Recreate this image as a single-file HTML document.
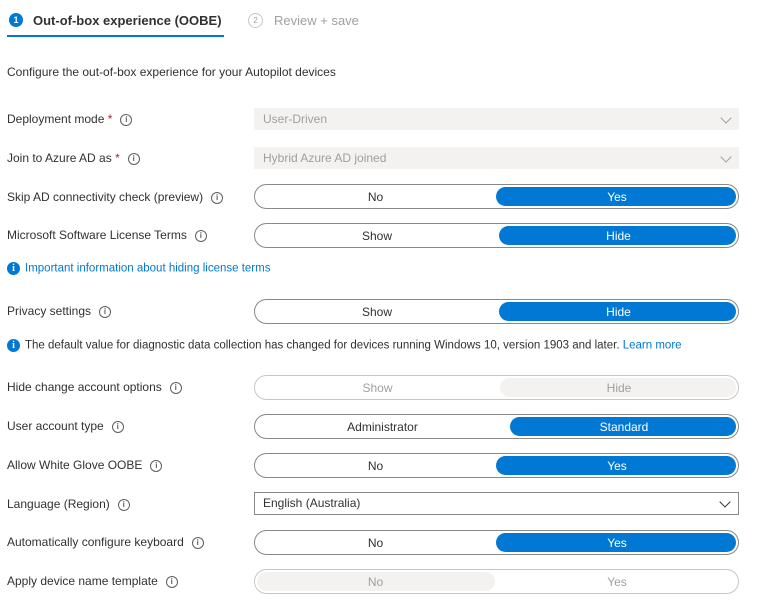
<html><head><style>
body{margin:0;width:768px;height:608px;background:#fff;font-family:"Liberation Sans",sans-serif;font-size:12px;color:#323130;position:relative;overflow:hidden}
.a{position:absolute;white-space:nowrap}
.lbl{left:7px;line-height:16px}
.i{display:inline-block;width:10px;height:10px;border:1px solid #605e5c;border-radius:50%;font-size:8px;line-height:10px;text-align:center;vertical-align:middle;margin-left:8px;color:#605e5c;font-weight:bold}
.req{color:#a4262c}
.dd{left:254px;width:485px;height:22px;background:#f3f2f1;color:#a19f9d;line-height:22px;box-sizing:border-box;padding-left:9px}
.chev{position:absolute;right:9px;top:6px;width:7px;height:7px;border-right:1.3px solid #a19f9d;border-bottom:1.3px solid #a19f9d;transform:rotate(45deg)}
.tg{left:254px;width:485px;height:25px;border:1.5px solid #8a8886;border-radius:13px;box-sizing:border-box}
.tg .p{position:absolute;top:2px;bottom:2px;border-radius:10px;background:#0078d4}
.tg .t{position:absolute;top:1px;line-height:22px;text-align:center;color:#323130}
.tg .w{color:#fff}
.dis{border-color:#c8c6c4}
.dis .p{background:#f3f2f1}
.dis .t{color:#a19f9d}
.bi{display:inline-block;width:13px;height:13px;border-radius:50%;background:#0078d4;color:#fff;font-weight:bold;font-size:10px;line-height:13px;text-align:center;vertical-align:middle;margin-right:5px;font-family:"Liberation Serif",serif}
</style></head><body>
<div class="a" style="left:9px;top:13px;width:14px;height:14px;border-radius:50%;background:#0078d4;color:#fff;font-size:9px;line-height:14px;text-align:center;font-weight:bold">1</div>
<div class="a" style="left:33px;top:13px;font-size:13px;font-weight:bold;color:#323130">Out-of-box experience (OOBE)</div>
<div class="a" style="left:7px;top:35px;width:217px;height:2px;background:#0078d4"></div>
<div class="a" style="left:248px;top:13px;width:13px;height:13px;border-radius:50%;border:1px solid #c8c6c4;color:#a19f9d;font-size:8px;line-height:13px;text-align:center">2</div>
<div class="a" style="left:274px;top:13px;font-size:13px;color:#a19f9d">Review + save</div>
<div class="a lbl" style="top:64px">Configure the out-of-box experience for your Autopilot devices</div>

<div class="a lbl" style="top:111px">Deployment mode <span class="req">*</span><span class="i">i</span></div>
<div class="a dd" style="top:108px">User-Driven<div class="chev"></div></div>
<div class="a lbl" style="top:150px">Join to Azure AD as <span class="req">*</span><span class="i">i</span></div>
<div class="a dd" style="top:147px">Hybrid Azure AD joined<div class="chev"></div></div>

<div class="a lbl" style="top:189px">Skip AD connectivity check (preview)<span class="i">i</span></div>
<div class="a tg" style="top:184px"><div class="p" style="left:241px;right:2px"></div><div class="t" style="left:0;width:241px">No</div><div class="t w" style="left:241px;right:0">Yes</div></div>
<div class="a lbl" style="top:227px">Microsoft Software License Terms<span class="i">i</span></div>
<div class="a tg" style="top:223px"><div class="p" style="left:244px;right:2px"></div><div class="t" style="left:0;width:244px">Show</div><div class="t w" style="left:244px;right:0">Hide</div></div>
<div class="a" style="left:7px;top:262px;color:#0078d4;font-size:11.5px"><span class="bi">i</span>Important information about hiding license terms</div>

<div class="a lbl" style="top:303px">Privacy settings<span class="i">i</span></div>
<div class="a tg" style="top:299px"><div class="p" style="left:244px;right:2px"></div><div class="t" style="left:0;width:244px">Show</div><div class="t w" style="left:244px;right:0">Hide</div></div>
<div class="a" style="left:7px;top:339px;font-size:11.5px"><span class="bi">i</span>The default value for diagnostic data collection has changed for devices running Windows 10, version 1903 and later. <span style="color:#0078d4">Learn more</span></div>

<div class="a lbl" style="top:379px">Hide change account options<span class="i">i</span></div>
<div class="a tg dis" style="top:375px"><div class="p" style="left:245px;right:2px"></div><div class="t" style="left:0;width:245px">Show</div><div class="t" style="left:245px;right:0">Hide</div></div>
<div class="a lbl" style="top:418px">User account type<span class="i">i</span></div>
<div class="a tg" style="top:414px"><div class="p" style="left:255px;right:2px"></div><div class="t" style="left:0;width:255px">Administrator</div><div class="t w" style="left:255px;right:0">Standard</div></div>
<div class="a lbl" style="top:457px">Allow White Glove OOBE<span class="i">i</span></div>
<div class="a tg" style="top:453px"><div class="p" style="left:241px;right:2px"></div><div class="t" style="left:0;width:241px">No</div><div class="t w" style="left:241px;right:0">Yes</div></div>
<div class="a lbl" style="top:496px">Language (Region)<span class="i">i</span></div>
<div class="a dd" style="top:492px;height:23px;background:#fff;border:1px solid #8a8886;color:#323130;line-height:21px;padding-left:8px">English (Australia)<div class="chev" style="border-color:#323130;top:5px"></div></div>
<div class="a lbl" style="top:534px">Automatically configure keyboard<span class="i">i</span></div>
<div class="a tg" style="top:530px"><div class="p" style="left:241px;right:2px"></div><div class="t" style="left:0;width:241px">No</div><div class="t w" style="left:241px;right:0">Yes</div></div>
<div class="a lbl" style="top:573px">Apply device name template<span class="i">i</span></div>
<div class="a tg dis" style="top:569px"><div class="p" style="left:2px;width:238px"></div><div class="t" style="left:0;width:241px">No</div><div class="t" style="left:241px;right:0">Yes</div></div>
</body></html>
